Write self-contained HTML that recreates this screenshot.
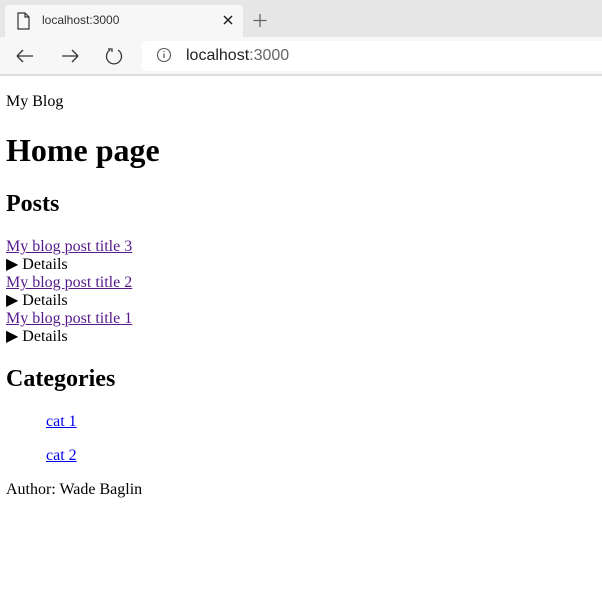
<!DOCTYPE html>
<html><head><style>
body{margin:0;width:602px;height:602px;overflow:hidden;background:#fff;font-family:"Liberation Serif",serif;position:relative}
.a{position:absolute;white-space:nowrap}
.ui{font-family:"Liberation Sans",sans-serif}
a{color:#551a8b}
a.b{color:#0000ee}
</style></head><body>
<div style="position:absolute;left:0;top:0;width:602px;height:37px;background:#e6e6e6"></div>
<div style="position:absolute;left:5px;top:5px;width:238px;height:33px;background:#f7f7f7;border-radius:4px 4px 0 0"></div>
<div style="position:absolute;left:0;top:37px;width:602px;height:38px;background:#f7f7f7"></div>
<div style="position:absolute;left:0;top:74px;width:602px;height:2px;background:#ddd"></div>
<div style="position:absolute;left:142px;top:41px;width:460px;height:30px;background:#fff;border-radius:4px 0 0 4px"></div>
<svg class="a" style="left:0;top:0" width="602" height="76">
<path d="M18 13h7l4 4v12h-11z M25 13v4h4" fill="none" stroke="#333" stroke-width="1.2"/>
<path d="M224 16l8 8M232 16l-8 8" stroke="#222" stroke-width="1.5"/>
<path d="M260 14v13M253.5 20.5h13" stroke="#666" stroke-width="1.3"/>
<path d="M17 56h16M17 56l6-6M17 56l6 6" fill="none" stroke="#333" stroke-width="1.3"/>
<path d="M62 56h16M78 56l-6-6M78 56l-6 6" fill="none" stroke="#333" stroke-width="1.3"/>
<path d="M110 50a7.5 7.5 0 1 0 8 0M108 49h4v3" fill="none" stroke="#333" stroke-width="1.3"/>
<circle cx="164" cy="55" r="6.5" fill="none" stroke="#555" stroke-width="1.1"/>
<path d="M164 53.5v4.5M164 51v1" stroke="#555" stroke-width="1.2"/>
</svg>
<div class="a ui" style="left:42px;top:13px;font-size:12px;color:#333">localhost:3000</div>
<div class="a ui" style="left:186px;top:47px;font-size:16px;color:#222">localhost<span style="color:#666">:3000</span></div>
<div class="a" style="left:6px;top:93px;font-size:16px">My Blog</div>
<div class="a" style="left:6px;top:132px;font-size:32px;font-weight:bold">Home page</div>
<div class="a" style="left:6px;top:191px;font-size:24px;font-weight:bold">Posts</div>
<div class="a" style="left:6px;top:238px;font-size:16px;line-height:18px">
<a href="#">My blog post title 3</a><br>▶ Details<br>
<a href="#">My blog post title 2</a><br>▶ Details<br>
<a href="#">My blog post title 1</a><br>▶ Details</div>
<div class="a" style="left:6px;top:366px;font-size:24px;font-weight:bold">Categories</div>
<div class="a" style="left:46px;top:413px;font-size:16px"><a class="b" href="#">cat 1</a></div>
<div class="a" style="left:46px;top:447px;font-size:16px"><a class="b" href="#">cat 2</a></div>
<div class="a" style="left:6px;top:481px;font-size:16px">Author: Wade Baglin</div>
</body></html>
